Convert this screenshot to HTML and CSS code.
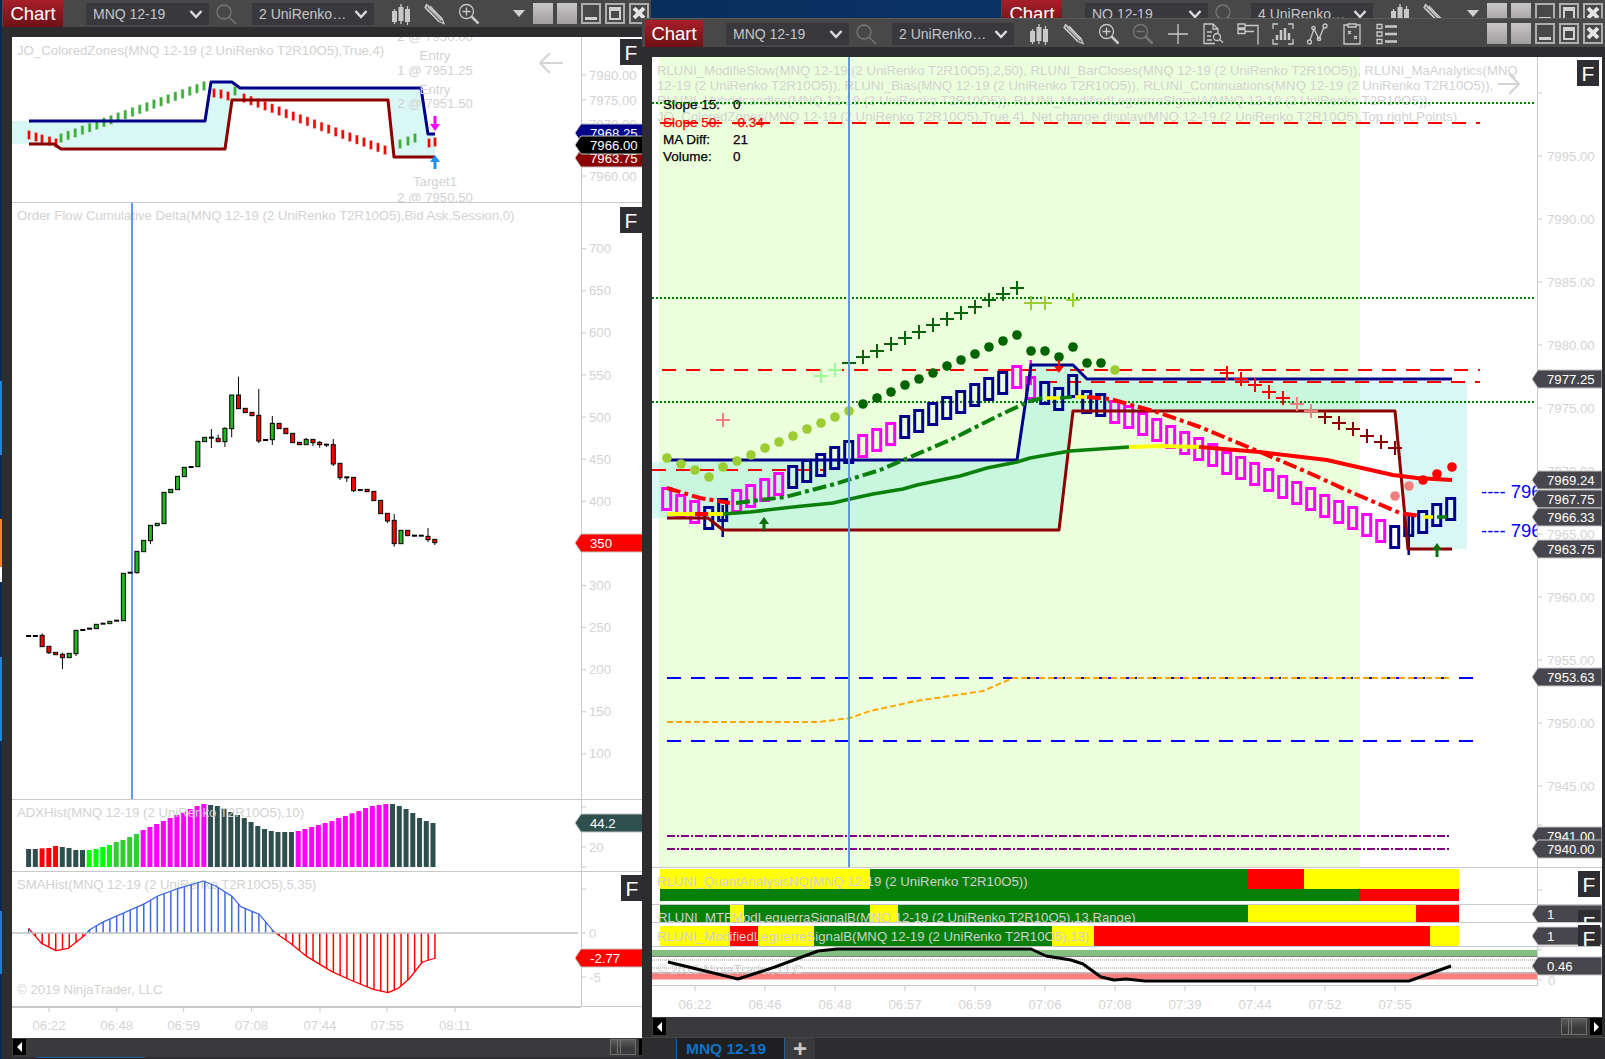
FILE: index.html
```html
<!DOCTYPE html>
<html lang="en">
<head>
<meta charset="utf-8">
<title>Chart</title>
<link rel="stylesheet" href="styles.css">
</head>
<body>
<svg class="defs" aria-hidden="true">
  <symbol id="i-candles" viewBox="0 0 22 22">
    <path class="s" d="M4.5 6v15M11 1v20M17.5 3v19"/>
    <path class="f" d="M2 8h5v11H2zM8.500 4h5v14h-5zM15 6h5v13h-5z"/>
  </symbol>
  <symbol id="i-pencil" viewBox="0 0 22 22">
    <path class="s" d="M2.500 1.500l-1.500 3 14 14 5 2-2-5z"/>
    <path class="s" d="M4 4l13.500 13.500M1.500 4.500l2.500-2.500M6 3l12 13M3 6l12 12.500"/>
  </symbol>
  <symbol id="i-zoomin" viewBox="0 0 22 22">
    <circle class="s" cx="8.500" cy="8.500" r="7"/>
    <path class="s" d="M8.500 4.500v8M4.500 8.500h8"/>
    <path class="h" d="M13.500 13.500l7 7"/>
  </symbol>
  <symbol id="i-zoomout" viewBox="0 0 22 22">
    <circle class="s dim" cx="8.500" cy="8.500" r="7"/>
    <path class="s dim" d="M4.500 8.500h8"/>
    <path class="h dim" d="M13.500 13.500l7 7"/>
  </symbol>
  <symbol id="i-search" viewBox="0 0 22 22">
    <circle class="s dim" cx="9" cy="9" r="7"/>
    <path class="s dim" d="M14 14l7 7"/>
  </symbol>
  <symbol id="i-plus" viewBox="0 0 22 22">
    <path class="s" d="M11 1v20M1 11h20"/>
  </symbol>
  <symbol id="i-doc" viewBox="0 0 22 22">
    <path class="s" d="M13 20.500H2V1h9l5 5v4M11 1v5h5M5 9h5M5 13h4M5 17h5"/>
    <circle class="s" cx="15" cy="14" r="3.500"/>
    <path class="s" d="M17.500 16.500l3.500 3"/>
  </symbol>
  <symbol id="i-table" viewBox="0 0 22 22">
    <path class="s" d="M1 1h7v4H1zM1 6.500h7v4H1zM8 2.500h13v19M8 8.500h9"/>
  </symbol>
  <symbol id="i-frame" viewBox="0 0 22 22">
    <path class="s" d="M6 1H1v5M16 1h5v5M6 21H1v-5M16 21h5v-5"/>
    <path class="s th" d="M5 17v-5M9 17V7M13 17V5M17 17v-7"/>
  </symbol>
  <symbol id="i-nodes" viewBox="0 0 22 22">
    <path class="s" d="M4 17L8 6l5 10 5-12"/>
    <circle class="s" cx="3.500" cy="19" r="2"/><circle class="s" cx="7.500" cy="5" r="1.700"/>
    <circle class="s" cx="13" cy="16" r="1.700"/><circle class="s" cx="19" cy="3" r="2"/>
  </symbol>
  <symbol id="i-clip" viewBox="0 0 22 22">
    <path class="s" d="M7 2H3v19h16V2h-4M7 1h8v3H7zM7 8l3 3M10 8l-3 3M13 13l3 3M16 13l-3 3"/>
  </symbol>
  <symbol id="i-list" viewBox="0 0 22 22">
    <path class="s" d="M1 1.500h5v4H1zM1 9h5v4H1zM1 16.500h5v4H1z"/>
    <path class="h" d="M9 3.500h12M9 11h12M9 18.500h12"/>
  </symbol>
  <symbol id="i-chev" viewBox="0 0 14 10">
    <path class="h" d="M1.500 2l5.500 6 5.500-6"/>
  </symbol>
</svg>

<main class="desktop">
  <div class="strip"></div>

  <section class="win win-left">
    <header class="tb">
      <button class="chart-btn">Chart</button>
      <div class="dd g23"><span>MNQ 12-19</span><svg class="chev"><use href="#i-chev"/></svg></div>
      <svg class="ic g6"><use href="#i-search"/></svg>
      <div class="dd dd2 g15"><span>2 UniRenko…</span><svg class="chev"><use href="#i-chev"/></svg></div>
      <div class="icons g16">
        <svg class="ic"><use href="#i-candles"/></svg>
        <svg class="ic"><use href="#i-pencil"/></svg>
        <svg class="ic"><use href="#i-zoomin"/></svg>
      </div>
      <div class="ctrls">
        <i class="tri"></i><i class="sq"></i><i class="sq"></i>
        <i class="wb wb-min"></i><i class="wb wb-max"></i><i class="wb wb-close"></i>
      </div>
    </header>
    <div class="band"></div>
    <div class="stack stack-left">
      <div class="pane line"><svg id="pA" viewBox="12 37 639 165"></svg></div>
      <div class="pane line"><svg id="pB" viewBox="12 203 639 596"></svg></div>
      <div class="pane line"><svg id="pC" viewBox="12 800 639 71"></svg></div>
      <div class="pane line"><svg id="pD" viewBox="12 872 639 134"></svg></div>
      <div class="pane"><svg id="pT" viewBox="12 1006 639 31"></svg></div>
      <div class="scroll"><i class="sb"><b class="tl"></b></i><i class="thumb"></i><i class="sb"><b class="tr"></b></i></div>
      <div class="minitabs"><i></i></div>
    </div>
  </section>

  <section class="win win-back">
    <header class="tb">
      <button class="chart-btn">Chart</button>
      <div class="dd g23"><span>NQ 12-19</span><svg class="chev"><use href="#i-chev"/></svg></div>
      <svg class="ic g6"><use href="#i-search"/></svg>
      <div class="dd dd2 g15"><span>4 UniRenko…</span><svg class="chev"><use href="#i-chev"/></svg></div>
      <div class="icons g16">
        <svg class="ic"><use href="#i-candles"/></svg>
        <svg class="ic"><use href="#i-pencil"/></svg>
      </div>
      <div class="ctrls">
        <i class="tri"></i><i class="sq"></i><i class="sq"></i>
        <i class="wb wb-min"></i><i class="wb wb-max"></i><i class="wb wb-close"></i>
      </div>
    </header>
  </section>

  <section class="win win-main">
    <header class="tb tb-main">
      <button class="chart-btn">Chart</button>
      <div class="dd g23"><span>MNQ 12-19</span><svg class="chev"><use href="#i-chev"/></svg></div>
      <svg class="ic g6"><use href="#i-search"/></svg>
      <div class="dd dd2 g15"><span>2 UniRenko…</span><svg class="chev"><use href="#i-chev"/></svg></div>
      <div class="icons icons-wide g14">
        <svg class="ic"><use href="#i-candles"/></svg>
        <svg class="ic"><use href="#i-pencil"/></svg>
        <svg class="ic"><use href="#i-zoomin"/></svg>
        <svg class="ic"><use href="#i-zoomout"/></svg>
        <svg class="ic"><use href="#i-plus"/></svg>
        <svg class="ic"><use href="#i-doc"/></svg>
        <svg class="ic"><use href="#i-table"/></svg>
        <svg class="ic"><use href="#i-frame"/></svg>
        <svg class="ic"><use href="#i-nodes"/></svg>
        <svg class="ic"><use href="#i-clip"/></svg>
        <svg class="ic"><use href="#i-list"/></svg>
      </div>
      <div class="ctrls">
        <i class="sq"></i><i class="sq"></i>
        <i class="wb wb-min"></i><i class="wb wb-max"></i><i class="wb wb-close"></i>
      </div>
    </header>
    <div class="band"></div>
    <div class="stack stack-main">
      <div class="pane line"><svg id="m0" viewBox="652 57 950 810"></svg></div>
      <div class="pane line"><svg id="m1" viewBox="652 868 950 36"></svg></div>
      <div class="pane line"><svg id="m2" viewBox="652 905 950 17"></svg></div>
      <div class="pane line"><svg id="m3" viewBox="652 923 950 23"></svg></div>
      <div class="pane"><svg id="m4" viewBox="652 947 950 39"></svg></div>
      <div class="pane"><svg id="mT" viewBox="652 986 950 31"></svg></div>
      <div class="scroll"><i class="sb"><b class="tl"></b></i><i class="thumb"></i><i class="sb"><b class="tr"></b></i></div>
    </div>
    <nav class="tabs">
      <span class="tab">MNQ 12-19</span>
      <span class="tab-add">+</span>
    </nav>
  </section>
</main>
<script src="chart.js"></script>
</body>
</html>
```
FILE: styles.css
```css
* { box-sizing: border-box; }
html, body { margin: 0; height: 100%; overflow: hidden; }
body { background: #062a55; font-family: "Liberation Sans", Arial, sans-serif; }
.defs { position: absolute; width: 0; height: 0; }
.desktop { position: relative; width: 1605px; height: 1059px; overflow: hidden;
  background: linear-gradient(90deg, #04264e, #0a3263 60%, #062a55); }
.strip { position: absolute; left: 0; top: 0; width: 2px; height: 100%;
  background: linear-gradient(180deg, #0a2a50 0 36%, #1a8ad0 36% 43%, #0a2a50 43% 49%, #f2861e 49% 53.500%, #fff 53.500% 55%, #0a2a50 55% 62%, #1a8ad0 62% 70%, #0a2a50 70% 86%, #1680c8 86% 92%, #0a2a50 92%); }

.win { position: absolute; display: flex; flex-direction: column; background: #2d2d2f; }
.win-left { left: 2px; top: 0; width: 649px; height: 1059px; }
.win-back { left: 1001px; top: 0; width: 604px; height: 30px; }
.win-main { left: 642px; top: 18px; width: 963px; height: 1041px; z-index: 2; }

.tb { display: flex; align-items: center; flex: none; height: 27px; padding-right: 2px; background: #484848; }
.tb-main { height: 29px; padding-top: 1px; border-top: 1px solid #5a5a5a; }
.band { flex: none; height: 10px; background: #2d2d2f; }

.chart-btn { flex: none; width: 60px; height: 100%; margin-left: 1px; padding: 0; border: 0; color: #fff;
  font: 18.500px "Liberation Sans", Arial, sans-serif; background: linear-gradient(180deg, #a81f29, #6e1116); }
.tb-main .chart-btn { width: 58px; margin-left: 3px; }
.dd { flex: none; display: flex; align-items: center; justify-content: space-between; width: 123px; height: 22px; padding: 0 6px 0 7px;
  color: #c6c6c6; font-size: 14px; background: #38383d; }
.dd2 { width: 122px; }
.chev { width: 14px; height: 10px; color: #dcdcdc; }
.g6 { margin-left: 6px; } .g14 { margin-left: 14px; } .g15 { margin-left: 15px; }
.g16 { margin-left: 16px; } .g23 { margin-left: 23px; }
.icons { display: flex; gap: 12px; }
.icons-wide { gap: 12.800px; }
.ic { flex: none; width: 22px; height: 22px; color: #c8c8c8; }
.s { fill: none; stroke: currentColor; stroke-width: 1.300; }
.th { stroke-width: 2.500; }
.f { fill: currentColor; }
.h { fill: none; stroke: currentColor; stroke-width: 2.500; }
.dim { stroke: #777; }
.ctrls { display: flex; align-items: center; gap: 4px; margin-left: auto; }
.tri { width: 0; height: 0; margin-right: 4px; border-left: 6px solid transparent; border-right: 6px solid transparent; border-top: 7px solid #d0d0d0; }
.sq { width: 20px; height: 21px; background: linear-gradient(180deg, #c8c6c6, #a09e9e); }
.wb { position: relative; width: 20px; height: 21px; border: 2px solid #aeaeae; }
.wb-min::after { content: ""; position: absolute; left: 2px; right: 2px; bottom: 2px; height: 3px; background: #d0d0d0; }
.wb-max::after { content: ""; position: absolute; inset: 2px; border: 2px solid #d0d0d0; border-top-width: 4px; }
.wb-close::before, .wb-close::after { content: ""; position: absolute; left: 1px; right: 1px; top: 6px; height: 4px; background: #e4e4e4; transform: rotate(45deg); }
.wb-close::after { transform: rotate(-45deg); }

.stack { display: grid; flex: none; background: #fff; }
.stack-left { margin-left: 10px; grid-template-rows: 166px 597px 72px 135px 31px 19px 3px; height: 1023px; }
.stack-main { margin: 0 3px 0 10px; grid-template-rows: 811px 37px 18px 24px 39px 31px 20px; height: 980px; }
.pane { min-width: 0; min-height: 0; background: #fff; }
.line { border-bottom: 1px solid #c9c9c9; }
.pane svg { display: block; width: 100%; height: 100%; overflow: hidden; }

.scroll { display: flex; align-items: center; justify-content: space-between; padding: 1px 0 2px 1px; background: #3a3a3c; }
.sb { display: flex; align-items: center; justify-content: center; flex: none; width: 13px; height: 100%; background: #000; }
.sb:last-child { width: 12px; margin-left: 3px; }
.tl, .tr { width: 0; height: 0; border-top: 5px solid transparent; border-bottom: 5px solid transparent; }
.tl { border-right: 5px solid #fff; }
.tr { border-left: 5px solid #fff; }
.thumb { width: 26px; height: 100%; margin-left: auto; border: 1px solid #6e6e6e;
  background: linear-gradient(90deg, transparent 6px, #777 6px 7px, transparent 7px 9px, #777 9px 10px, transparent 10px), linear-gradient(180deg, #5c5c5c, #3a3a3c 60%); }
.minitabs { background: #2d2d2f; }
.minitabs i { display: block; width: 109px; height: 100%; margin-left: 24px; background: #1c1c1e; border-top: 1px solid #1c5f9c; }

.tabs { display: flex; flex: 1; padding-left: 34px; background: #2d2d2f; border-top: 1px solid #444; }
.tab { display: flex; align-items: center; justify-content: flex-start; width: 109px; padding-left: 9px; color: #0f72c8; font-size: 15.500px; font-weight: 700;
  background: #1f1f21; border: 1px solid #1c5f9c; border-width: 0 1px; }
.tab-add { width: 30px; color: #c8c8c8; font-size: 24px; font-weight: 700; line-height: 22px; text-align: center; background: #3a3a3c; }

svg text { font-family: "Liberation Sans", Arial, sans-serif; dominant-baseline: central; }
.lg { fill: #d2d2d2; font-size: 13.200px; }
.ax { fill: #d4d4d4; font-size: 13.200px; }
.mk { fill: #fff; font-size: 13.200px; }
.fb { fill: #fff; font-size: 21px; }
.info { fill: #000; stroke: #000; stroke-width: 0.250px; font-size: 13.500px; }
.info-red { fill: #f00; stroke: #f00; }
.blue { fill: #00f; font-size: 18.500px; }
```
FILE: chart.js
```js
const NS = "http://www.w3.org/2000/svg";
const $ = id => document.getElementById(id);
function S(p, t, a, x) {
  const e = document.createElementNS(NS, t);
  for (const k in a) if (a[k] != null) e.setAttribute(k, a[k]);
  if (x != null) e.textContent = x;
  p.appendChild(e);
  return e;
}
const line = (p, x1, y1, x2, y2, c, w = 1, d) => S(p, "line", { x1, y1, x2, y2, stroke: c, "stroke-width": w, "stroke-dasharray": d });
const poly = (p, pts, c, w = 2, d) => S(p, "polyline", { points: pts.join(" "), fill: "none", stroke: c, "stroke-width": w, "stroke-dasharray": d, "stroke-linejoin": "round" });
const area = (p, pts, c, clip) => S(p, "polygon", { points: pts.join(" "), fill: c, "clip-path": clip });
const rect = (p, x, y, w, h, c, st, sw) => S(p, "rect", { x, y, width: w, height: h, fill: c, stroke: st, "stroke-width": sw });
const txt = (p, x, y, s, cls, anchor) => S(p, "text", { x, y, class: cls, "text-anchor": anchor }, s);
const plus = (p, x, y, c, s = 7) => { line(p, x - s, y, x + s, y, c, 2); line(p, x, y - s, x, y + s, c, 2); };
const dot = (p, x, y, c, r = 4.8) => S(p, "circle", { cx: x, cy: y, r, fill: c });
function fbtn(p, x, y) { rect(p, x, y, 22, 26, "#2d2d32"); txt(p, x + 11, y + 13, "F", "fb", "middle"); }
function mark(p, x1, x2, y, s, bg, tx = 15, h = 18) {
  area(p, [x1, y, x1 + 6, y - h / 2, x2, y - h / 2, x2, y + h / 2, x1 + 6, y + h / 2], bg).setAttribute("stroke", "#c4c4c4");
  txt(p, x1 + tx, y, s, "mk");
}
function arrow(p, x, y1, y2, c, w = 3) {
  const d = y2 > y1 ? 1 : -1;
  line(p, x, y1, x, y2 - d * 4, c, w);
  area(p, [x - 5, y2 - d * 7, x + 5, y2 - d * 7, x, y2], c);
}
const tick = (p, x, y, w = 5) => line(p, x, y, x + w, y, "#c9c9c9");

/* ---------- left: colored zones ---------- */
(function () {
  const p = $("pA");
  area(p, [12, 121, 205, 121, 211, 82, 232, 82, 240, 88, 421, 88, 428, 134, 435, 134, 435, 157, 394, 157, 388, 100, 232, 100, 225, 149, 61, 149, 54, 144, 12, 144], "#d9f7f5");
  txt(p, 17, 50, "JO_ColoredZones(MNQ 12-19 (2 UniRenko T2R10O5),True,4)", "lg");
  const bar = (x, y, c) => rect(p, x - 1.5, y - 4.5, 3, 9, c, "#cfcfcf", 0.5);
  [[29, 135], [36, 137], [42, 139], [49.5, 141], [56, 143]].forEach(a => bar(a[0], a[1], "#f00"));
  for (let i = 0; i < 21; i++) bar(61 + 7.15 * i, 138 - 2.6 * i, "#32b432");
  [[214, 93], [221, 94], [228, 96]].forEach(a => bar(a[0], a[1], "#f00"));
  bar(235, 91, "#32b432");
  for (let i = 0; i < 21; i++) bar(244 + 7.05 * i, 98 + 2.6 * i, "#f00");
  [[400, 144], [408, 141], [415, 138]].forEach(a => bar(a[0], a[1], "#32b432"));
  [[429, 143], [435, 142]].forEach(a => bar(a[0], a[1], "#f00"));
  poly(p, [29, 121, 205, 121, 211, 82, 232, 82, 240, 88, 421, 88, 428, 134, 435, 134], "#00008b", 3);
  poly(p, [29, 144, 54, 144, 61, 149, 225, 149, 232, 100, 388, 100, 394, 157, 435, 157], "#8b0000", 3);
  arrow(p, 435, 116, 131, "#f0f");
  arrow(p, 435, 169, 155, "#1e90ff");
  [[36, "2 @ 7950.00"], [55, "Entry"], [70, "1 @ 7951.25"], [89, "Entry"], [103, "2 @ 7951.50"], [181, "Target1"], [197, "2 @ 7950.50"]]
    .forEach(a => txt(p, 435, a[0], a[1], "lg", "middle"));
  poly(p, [550, 53, 540, 63, 550, 73], "#d4d4d4", 2);
  line(p, 540, 63, 563, 63, "#d4d4d4", 2);
  line(p, 581.5, 37, 581.5, 202, "#c9c9c9");
  [[7980, 75], [7975, 100], [7970, 124], [7965, 150], [7960, 176]].forEach(a => { tick(p, 581, a[1]); txt(p, 589, a[1], a[0] + ".00", "ax"); });
  mark(p, 575, 651, 133, "7968.25", "#00008b");
  mark(p, 575, 651, 158, "7963.75", "#8b0000");
  mark(p, 575, 651, 145, "7966.00", "#000");
  fbtn(p, 620, 39);
})();

/* ---------- left: cumulative delta candles ---------- */
(function () {
  const p = $("pB");
  txt(p, 17, 215, "Order Flow Cumulative Delta(MNQ 12-19 (2 UniRenko T2R10O5),Bid Ask,Session,0)", "lg");
  line(p, 581.5, 203, 581.5, 799, "#c9c9c9");
  for (let v = 100; v <= 700; v += 50) {
    const y = 375 + (550 - v) * 0.842;
    tick(p, 581, y);
    if (v !== 350) txt(p, 589, y, String(v), "ax");
  }
  line(p, 132, 203, 132, 799, "#6495ed", 2);
  // [colour, top, bottom, high, low] in crop units: y = 360 + v / 3
  const c = [["d", 828], ["d", 828], ["r", 826, 860, 820], ["r", 859, 878, 0, 882], ["r", 877, 884], ["r", 883, 893, 878, 927], ["g", 880, 893], ["g", 811, 881, 0, 888], ["d", 810], ["d", 806], ["g", 793, 806], ["d", 791], ["g", 784, 791], ["d", 782], ["g", 640, 782], ["d", 638], ["g", 574, 638, 0, 641], ["g", 541, 575], ["g", 496, 542, 0, 552], ["g", 490, 497], ["g", 397, 491], ["g", 388, 398], ["g", 349, 389], ["g", 322, 350], ["d", 321], ["g", 244, 320], ["g", 232, 245], ["d", 233, 0, 207, 264], ["r", 235, 245, 224], ["g", 205, 245, 202, 261], ["g", 105, 206, 0, 232], ["r", 105, 146, 50], ["r", 145, 158], ["r", 157, 167], ["r", 166, 243, 87, 249], ["d", 240], ["g", 190, 239, 168, 255], ["r", 190, 206], ["r", 205, 221], ["r", 220, 248], ["r", 247, 254], ["g", 238, 254, 234], ["r", 238, 248, 0, 258], ["r", 247, 254, 243, 263], ["d", 254, 0, 0, 261], ["r", 254, 312, 237, 318], ["r", 310, 353, 0, 360], ["d", 352, 0, 0, 366], ["r", 352, 392, 0, 396], ["d", 390], ["r", 388, 395], ["r", 394, 422], ["r", 421, 461], ["r", 460, 483, 0, 489], ["r", 481, 551, 462, 560], ["g", 511, 551], ["r", 511, 527], ["d", 527, 0, 0, 530], ["d", 527], ["r", 529, 539, 504, 546], ["r", 538, 548, 0, 555]];
  const Y = v => 360 + v / 3;
  c.forEach((k, i) => {
    const x = 28.6 + 6.77 * i;
    if (k[3]) line(p, x, Y(k[3]), x, Y(k[1]), "#000");
    if (k[4]) line(p, x, Y(k[2] || k[1]), x, Y(k[4]), "#000");
    if (k[0] === "d") rect(p, x - 2.5, Y(k[1]) - 1, 5, 2, "#000");
    else rect(p, x - 2, Y(k[1]), 4, Y(k[2]) - Y(k[1]), k[0] === "g" ? "#22b422" : "#f00", "#000", 1);
  });
  mark(p, 575, 651, 543, "350", "#f00");
  fbtn(p, 620, 207);
})();

/* ---------- left: ADX histogram ---------- */
(function () {
  const p = $("pC");
  const tops = [207, 207, 205, 204, 198, 201, 204, 210, 210, 210, 207, 201, 195, 186, 180, 171, 162, 150, 141, 132, 123, 114, 105, 96, 87, 78, 72, 75, 78, 87, 96, 105, 114, 126, 138, 147, 153, 156, 156, 156, 153, 147, 141, 135, 129, 123, 114, 108, 100, 93, 84, 78, 75, 72, 72, 78, 87, 99, 114, 123, 129];
  const col = i => i < 2 ? "#2f4f4f" : i < 5 ? "#f00" : i < 9 ? "#2f4f4f" : i < 13 ? "#0f0" : i < 17 ? "#32cd32" : i < 27 ? "#f0f" : i < 40 ? "#2f4f4f" : i < 54 ? "#f0f" : "#2f4f4f";
  tops.forEach((t, i) => {
    const x = 26.1 + 6.74 * i, y = 780 + t / 3;
    rect(p, x, y, 5, 867 - y, col(i));
  });
  txt(p, 17, 812, "ADXHist(MNQ 12-19 (2 UniRenko T2R10O5),10)", "lg");
  line(p, 581.5, 800, 581.5, 871, "#c9c9c9");
  tick(p, 581, 807); tick(p, 581, 847); tick(p, 581, 867);
  txt(p, 589, 847, "20", "ax");
  mark(p, 575, 651, 823, "44.2", "#2f4f4f");
})();

/* ---------- left: SMA histogram ---------- */
(function () {
  const p = $("pD");
  txt(p, 17, 884, "SMAHist(MNQ 12-19 (2 UniRenko T2R10O5),5,35)", "lg");
  txt(p, 17, 989, "© 2019 NinjaTrader, LLC", "lg");
  const env = [[69, 445], [100, 490], [135, 512], [165, 505], [205, 465], [215, 450], [250, 425], [300, 398], [350, 370], [380, 348], [430, 325], [490, 303], [520, 318], [560, 350], [580, 380], [625, 403], [660, 455], [700, 490], [740, 530], [800, 575], [850, 603], [900, 628], [935, 638], [960, 625], [985, 598], [1018, 546], [1050, 534]];
  const yAt = v => { for (let i = 1; i < env.length; i++) if (v <= env[i][0]) { const a = env[i - 1], b = env[i]; return a[1] + (b[1] - a[1]) * (v - a[0]) / (b[0] - a[0]); } return 534; };
  for (let i = 0; i <= 60; i++) {
    const v = 69 + 16.32 * i, x = v / 2.41, y = 780 + yAt(v) / 3;
    line(p, x, 933, x, y, y < 933 ? "#4169e1" : "#f00", 1.500);
  }
  const seg = (from, to, c) => poly(p, env.filter(a => a[0] >= from && a[0] <= to).flatMap(a => [a[0] / 2.41, 780 + a[1] / 3]), c, 1.300);
  seg(69, 205, "#f00"); seg(205, 660, "#4169e1"); seg(660, 1050, "#f00");
  line(p, 12, 933, 578, 933, "#c0c0c0", 1.500);
  line(p, 581.5, 872, 581.5, 1006, "#c9c9c9");
  tick(p, 581, 889); tick(p, 581, 933); tick(p, 581, 977);
  txt(p, 589, 933, "0", "ax"); txt(p, 589, 977, "-5", "ax");
  mark(p, 575, 651, 958, "-2.77", "#f00");
  fbtn(p, 621, 875);
})();

/* ---------- left: time axis ---------- */
(function () {
  const p = $("pT");
  line(p, 12, 1006.500, 581, 1006.500, "#c9c9c9");
  [["06:22", 49], ["06:48", 116.7], ["06:59", 183.7], ["07:08", 251.6], ["07:44", 320], ["07:55", 387], ["08:11", 455]].forEach(a => {
    line(p, a[1], 1006, a[1], 1011, "#c9c9c9");
    txt(p, a[1], 1024, a[0], "ax", "middle");
  });
})();

/* ---------- main chart ---------- */
(function () {
  const p = $("m0"), NAVY = "#00008b", MAR = "#8b0000", DG = "#0b640b", LIME = "#9acd32", SAL = "#f08080";
  const defs = S(p, "defs", {});
  rect(S(defs, "clipPath", { id: "greenzone" }), 659, 57, 701, 810);
  rect(S(defs, "clipPath", { id: "plotarea" }), 652, 57, 885, 810);
  rect(p, 659, 57, 701, 810, "#ecffdc");
  const zone = [652, 462, 1017, 460, 1031, 365, 1073, 365, 1087, 382, 1467, 382, 1467, 549, 1408, 549, 1395, 411, 1073, 411, 1059, 530, 723, 530, 708, 518, 652, 518];
  area(p, zone, "#d9f7f5");
  area(p, zone, "#c8f7de", "url(#greenzone)");
  [[70, "RLUNI_ModifieSlow(MNQ 12-19 (2 UniRenko T2R10O5),2,50), RLUNI_BarCloses(MNQ 12-19 (2 UniRenko T2R10O5)), RLUNI_MaAnalytics(MNQ"],
   [85, "12-19 (2 UniRenko T2R10O5)), RLUNI_Bias(MNQ 12-19 (2 UniRenko T2R10O5)), RLUNI_Continuations(MNQ 12-19 (2 UniRenko T2R10O5)),"],
   [100, "RLUNI_Hybridcandles(MNQ 12-19 (2 UniRenko T2R10O5)), RLUNI_ModifiedLeguerreSignalA(MNQ 12-19 (2 UniRenko T2R10O5)),"],
   [116, "JO_ColoredZones(MNQ 12-19 (2 UniRenko T2R10O5),True,4), Net change display(MNQ 12-19 (2 UniRenko T2R10O5),Top right,Points)"]]
    .forEach(a => txt(p, 657, a[0], a[1], "lg"));
  [[104, "Slope 15:", "0"], [122, "Slope 50:", "-0.34"], [139, "MA Diff:", "21"], [156, "Volume:", "0"]].forEach((a, i) => {
    const c = i === 1 ? "info info-red" : "info";
    txt(p, 663, a[0], a[1], c); txt(p, 733, a[0], a[2], c);
  });
  poly(p, [1509, 74, 1519, 84, 1509, 94], "#d4d4d4", 2); line(p, 1498, 84, 1519, 84, "#d4d4d4", 2);

  [103, 298, 402].forEach(y => line(p, 652, y, 1535, y, "#0a7d0a", 2, "2 2"));
  [[660, 123, 1480], [662, 370, 1480], [1043, 382, 1480], [652, 470, 825]].forEach(a => line(p, a[0], a[1], a[2], a[1], "#f00", 2, "14 10"));
  line(p, 667, 678, 1474, 678, "#00f", 2, "14 10");
  line(p, 667, 741, 1482, 741, "#00f", 2, "14 10");
  poly(p, [667, 722, 819, 722, 850, 718, 870, 711, 916, 701, 983, 691, 1013, 678, 1449, 678], "#ffa500", 2, "6 3");
  line(p, 667, 836, 1451, 836, "#800080", 2, "8 2 2 2");
  line(p, 667, 849, 1451, 849, "#800080", 2, "8 2 2 2");

  const blue = S(p, "g", { "clip-path": "url(#plotarea)" });
  txt(blue, 1481, 491, "---- 7969", "blue"); txt(blue, 1481, 530, "---- 7963", "blue");

  // renko boxes: colour runs then centre heights
  const ys = [499, 506, 512, 518, 510, 501, 496, 490, 484, 477, 471, 465, 458, 452, 446, 440, 434, 427, 421, 414, 408, 402, 395, 389, 383, 377, 388, 393, 399, 386, 402, 405, 412, 417, 424, 430, 437, 443, 449, 455, 463, 468, 474, 480, 487, 493, 499, 506, 512, 518, 525, 531, 537, 525, 522, 515, 509];
  const mag = i => i < 3 || (i >= 5 && i < 9) || (i >= 14 && i < 17) || i === 25 || i === 26 || (i >= 32 && i < 52);
  line(p, 722.7, 505, 722.7, 537, NAVY, 2.500);
  line(p, 1408.7, 515, 1408.7, 555, NAVY, 2.500);
  line(p, 1030.7, 360, 1030.7, 385, "#f0f", 2.500);
  ys.forEach((y, i) => rect(p, 662.7 + 14 * i, y - 10.5, 8, 21, "none", mag(i) ? "#f0f" : NAVY, 3));

  // zone edges
  poly(p, [667, 460, 1017, 460, 1031, 365, 1073, 365, 1087, 379, 1452, 379], NAVY, 3);
  poly(p, [667, 518, 708, 518, 723, 530, 1059, 530, 1073, 411, 1395, 411, 1408, 549, 1452, 549], MAR, 3);

  // moving averages
  poly(p, [667, 514, 695, 514], "#ff0", 4); poly(p, [695, 514, 708, 514], "#f00", 4); poly(p, [708, 514, 723, 514], "#ff0", 4);
  poly(p, [723, 514, 750, 512, 793, 507, 833, 503, 850, 499, 873, 494, 903, 489, 917, 485, 960, 476, 987, 468, 1017, 462, 1030, 458, 1070, 451, 1129, 447], "#0a800a", 3.500);
  poly(p, [1129, 447, 1160, 446, 1199, 447], "#ff0", 4);
  poly(p, [1199, 447, 1260, 452, 1327, 460, 1353, 466, 1393, 475, 1417, 478, 1452, 480], "#f00", 4);
  const dash = "14 4 4 4";
  poly(p, [667, 488, 700, 498, 730, 503], "#f00", 4, dash);
  poly(p, [736, 503, 785, 497, 835, 484, 880, 470, 950, 440, 1000, 415, 1030, 401, 1043, 398], "#0a800a", 4, dash);
  line(p, 1045, 398, 1060, 398, "#ff0", 3.500); line(p, 1060, 398, 1072, 397, "#0a800a", 3.500); line(p, 1075, 397, 1086, 397, "#ff0", 3.500);
  poly(p, [1087, 397, 1110, 399, 1157, 412, 1200, 427, 1260, 452, 1307, 472, 1353, 493, 1400, 513, 1420, 516], "#f00", 4, dash);
  line(p, 1423, 517, 1433, 517, "#ff0", 3.500); line(p, 1437, 517, 1447, 517, "#0a800a", 3.500);

  // pluses
  [[849, 363], [863, 357], [877, 351], [891, 344], [905, 338], [919, 332], [933, 325], [947, 319], [961, 313], [975, 307], [989, 300], [1003, 294], [1017, 288]].forEach(a => plus(p, a[0], a[1], DG));
  [[1031, 303], [1045, 303], [1073, 300]].forEach(a => plus(p, a[0], a[1], LIME));
  [[821, 376], [835, 370]].forEach(a => plus(p, a[0], a[1], "#98fb98"));
  plus(p, 723, 420, SAL);
  [[1227, 373], [1241, 379], [1255, 385], [1269, 392], [1283, 398]].forEach(a => plus(p, a[0], a[1], "#f00"));
  [[1297, 404], [1311, 411]].forEach(a => plus(p, a[0], a[1], SAL));
  [[1325, 417], [1339, 423], [1353, 429], [1367, 436], [1381, 442], [1395, 448]].forEach(a => plus(p, a[0], a[1], MAR));

  // dots
  [[667, 458], [681, 464], [695, 470], [709, 477], [723, 467], [737, 461], [751, 455], [765, 448], [779, 442], [793, 436], [807, 429], [821, 423], [835, 417], [849, 411], [1115, 370]].forEach(a => dot(p, a[0], a[1], LIME));
  [[863, 404], [877, 398], [891, 392], [905, 385], [919, 379], [933, 373], [947, 366], [961, 360], [975, 354], [989, 347], [1003, 341], [1017, 335], [1031, 351], [1045, 351], [1059, 357], [1073, 347], [1087, 363], [1101, 363]].forEach(a => dot(p, a[0], a[1], "#006400"));
  [[1395, 496], [1409, 486]].forEach(a => dot(p, a[0], a[1], SAL));
  [[1423, 480], [1437, 474], [1452, 467]].forEach(a => dot(p, a[0], a[1], "#f00"));

  arrow(p, 1059, 360, 373, "#f00", 2);
  arrow(p, 764, 530, 517, "#0a6e0a", 3);
  arrow(p, 1437, 557, 543, "#0a6e0a", 3);

  line(p, 849, 57, 849, 867, "#6495ed", 2);
  line(p, 1537.500, 57, 1537.500, 867, "#c9c9c9");
  const Y = v => 156 + (7995 - v) * 12.6;
  tick(p, 1537, Y(8000));
  for (let v = 7995; v >= 7945; v -= 5) { tick(p, 1537, Y(v)); txt(p, 1547, Y(v), v + ".00", "ax"); }
  tick(p, 1537, 825);
  [[7977.25, 379], [7969.24, 480], [7967.75, 499], [7966.33, 517], [7963.75, 549], [7953.63, 677], [7941, 836], [7940, 849]].forEach(a => mark(p, 1532, 1602, a[1], a[0].toFixed(2), "#46464c"));
  fbtn(p, 1577, 60);
})();

/* ---------- signal bars ---------- */
function bands(p, y, h, list, start = 660) {
  let x = start;
  list.forEach(a => { rect(p, x, y, a[1] - x, h, a[0]); x = a[1]; });
}
const G = "#078007", Yl = "#ff0", R = "#f00";
(function () {
  const p = $("m1");
  bands(p, 869, 20, [[Yl, 870], [G, 1248], [R, 1304], [Yl, 1459]]);
  bands(p, 889, 12, [[G, 1359], [R, 1459]]);
  txt(p, 657, 881, "RLUNI_QuantAnalysisNQ(MNQ 12-19 (2 UniRenko T2R10O5))", "lg");
  line(p, 1537.500, 868, 1537.500, 904, "#c9c9c9"); tick(p, 1537, 890);
  fbtn(p, 1578, 871);
})();
(function () {
  const p = $("m2");
  bands(p, 905, 17, [[G, 730], [Yl, 744], [G, 870], [Yl, 898], [G, 1248], [Yl, 1416], [R, 1459]]);
  txt(p, 658, 917, "RLUNI_MTFModLeguerraSignalB(MNQ 12-19 (2 UniRenko T2R10O5),13,Range)", "lg");
  mark(p, 1532, 1602, 914, "1", "#46464c");
  fbtn(p, 1578, 910);
})();
(function () {
  const p = $("m3");
  bands(p, 926, 20, [[Yl, 730], [R, 758], [Yl, 814], [G, 1052], [Yl, 1094], [R, 1430], [Yl, 1459]]);
  txt(p, 657, 936, "RLUNI_ModifiedLeguerreSignalB(MNQ 12-19 (2 UniRenko T2R10O5),13)", "lg");
  mark(p, 1532, 1602, 936, "1", "#46464c");
  fbtn(p, 1578, 925);
})();
(function () {
  const p = $("m4");
  rect(p, 652, 950, 885, 6, "#82c082");
  line(p, 652, 956.500, 1537, 956.500, "#808080");
  line(p, 652, 960, 1537, 960, "#999", 1, "1 1");
  line(p, 652, 968, 1537, 968, "#999", 1, "1 1");
  line(p, 652, 973, 1537, 973, "#808080");
  rect(p, 652, 973.500, 885, 6, "#ff7f7f");
  txt(p, 657, 969, "© 2019 NinjaTrader, LLC", "lg");
  poly(p, [668, 962, 738, 979, 775, 967, 818, 951, 837, 949, 1031, 949, 1046, 956, 1071, 960, 1083, 964, 1101, 977, 1114, 980, 1126, 979, 1145, 981, 1409, 981, 1451, 966], "#000", 3);
  line(p, 652, 985.500, 1538, 985.500, "#c9c9c9");
  line(p, 1537.500, 947, 1537.500, 986, "#c9c9c9");
  tick(p, 1537, 950); tick(p, 1537, 980);
  txt(p, 1548, 980, "0", "ax");
  mark(p, 1532, 1602, 966, "0.46", "#46464c");
})();
(function () {
  const p = $("mT");
  ["06:22", "06:46", "06:48", "06:57", "06:59", "07:06", "07:08", "07:39", "07:44", "07:52", "07:55"].forEach((t, i) => {
    const x = 695 + 70 * i;
    line(p, x, 986, x, 991, "#c9c9c9");
    txt(p, x, 1004, t, "ax", "middle");
  });
})();
```
